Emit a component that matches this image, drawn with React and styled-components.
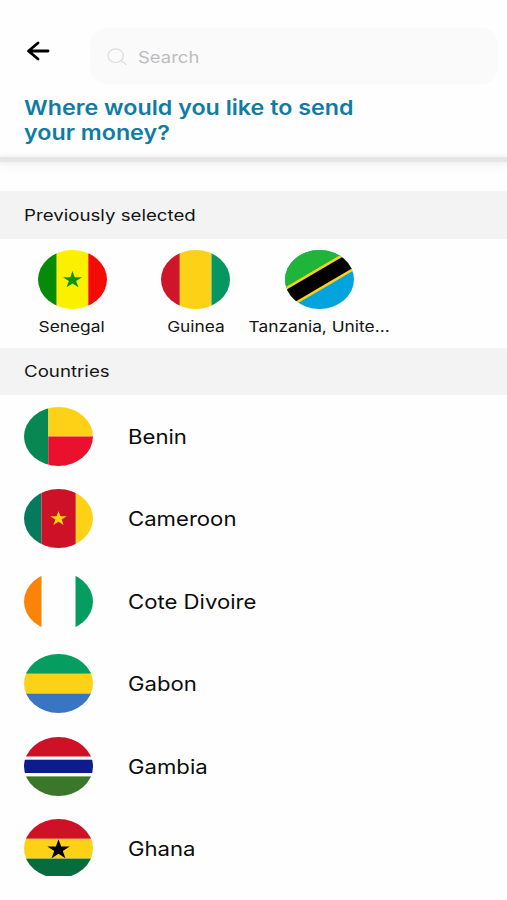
import React from 'react';
import styled, { createGlobalStyle } from 'styled-components';

const GlobalStyle = createGlobalStyle`
  * {
    box-sizing: border-box;
  }
  body {
    margin: 0;
    background: #fefefe;
    font-family: Inter, 'Liberation Sans', sans-serif;
  }
  h1, h2, ul {
    margin: 0;
    padding: 0;
  }
`;

const Screen = styled.main`
  display: flex;
  flex-direction: column;
  height: 900px;
  padding-bottom: 24px;
  overflow: hidden;
`;

const Header = styled.header`
  flex: none;
  height: 157px;
  padding: 28px 9px 0 24px;
`;

const TopBar = styled.div`
  display: flex;
  justify-content: space-between;
`;

const BackButton = styled.button`
  display: flex;
  width: 28px;
  height: 46px;
  padding: 0 0 0 1px;
  border: 0;
  background: none;
  align-items: center;
`;

const SearchBox = styled.div`
  display: flex;
  align-items: center;
  width: 408px;
  height: 56px;
  padding: 1px 0 0 17px;
  gap: 10px;
  border-radius: 17px;
  background: #fafafa;
`;

// wide lettering, grows from the left edge unless told otherwise
const Text = styled.span`
  display: block;
  white-space: nowrap;
  color: ${({ color }) => color ?? '#141414'};
  font-size: ${({ $size }) => $size}px;
  font-weight: ${({ $weight }) => $weight ?? 400};
  line-height: ${({ $line }) => $line ?? '24px'};
  transform: scaleX(${({ $stretch }) => $stretch ?? 1.17});
  transform-origin: ${({ $origin }) => $origin ?? 'left'} center;
`;

const Title = styled.h1`
  margin-top: 11px;
`;

const Divider = styled.div`
  flex: none;
  height: 5px;
  margin-bottom: 29px;
  background: #e6e6e6;
  box-shadow: 0 0 4px 1px #ececec, 0 6px 8px #f6f6f6;
`;

const SectionTitle = styled.h2`
  display: flex;
  flex: none;
  align-items: center;
  height: ${({ $height }) => $height}px;
  padding: 1px 0 0 24px;
  background: #f3f3f3;
`;

const Recent = styled.div`
  display: flex;
  flex: none;
  height: 109px;
  padding: 11px 0 0 10.2px;
`;

const RecentItem = styled.div`
  display: flex;
  flex-direction: column;
  align-items: center;
  width: 123.7px;
  gap: 6px;
`;

const List = styled.ul`
  flex: 1;
  min-height: 0;
  overflow: hidden;
  list-style: none;
`;

const Row = styled.li`
  display: flex;
  align-items: center;
  height: 82.5px;
  padding-left: 24px;
  gap: 34.5px;
`;

const CountryName = styled(Text)`
  padding-top: 1px;
`;

const FlagFrame = styled.svg`
  display: block;
  flex: none;
  width: 69px;
  height: 59px;
  border-radius: 50%;
`;

const STAR = '0,-1 .225,-.309 .951,-.309 .363,.118 .588,.809 0,.382 -.588,.809 -.363,.118 -.951,-.309 -.225,-.309';

const Star = ({ r, color, cy = 29.5 }) => (
  <polygon points={STAR} fill={color} transform={`translate(34.5 ${cy}) scale(${r * 1.12} ${r})`} />
);

// bands: [start, size, colour]
const Bands = ({ bands, vertical }) =>
  bands.map(([at, size, fill]) =>
    vertical ? (
      <rect key={at} x={at} y="0" width={size} height="59" fill={fill} />
    ) : (
      <rect key={at} x="0" y={at} width="69" height={size} fill={fill} />
    )
  );

const flags = {
  senegal: (
    <>
      <Bands vertical bands={[[0, 18.7, '#078a08'], [18.7, 31.6, '#fbf000'], [50.3, 18.7, '#f40b06']]} />
      <Star r={9} color="#0a9410" cy={30} />
    </>
  ),
  guinea: <Bands vertical bands={[[0, 18.8, '#ce1529'], [18.8, 31.7, '#fdd116'], [50.5, 18.5, '#069663']]} />,
  tanzania: (
    <>
      <rect width="69" height="59" fill="#03a3dd" />
      <path d="M0 0H69V-2L0 39Z" fill="#1eb53a" />
      <path d="M-2 38.6L71 -4.2V19.1L-2 61.9Z" fill="#fcd116" />
      <path d="M-2 41.7L71 -1.1V16.1L-2 58.9Z" fill="#000" />
    </>
  ),
  benin: (
    <>
      <rect width="24.3" height="59" fill="#078751" />
      <rect x="24.3" width="44.7" height="29.5" fill="#fdd116" />
      <rect x="24.3" y="29.5" width="44.7" height="29.5" fill="#e9112d" />
    </>
  ),
  cameroon: (
    <>
      <Bands vertical bands={[[0, 17.5, '#067a5e'], [17.5, 34.3, '#ce1126'], [51.8, 17.2, '#fdd116']]} />
      <Star r={7.8} color="#fdd116" cy={29.7} />
    </>
  ),
  ivory: <Bands vertical bands={[[0, 17.7, '#f98407'], [17.7, 33.8, '#fefefe'], [51.5, 17.5, '#069e60']]} />,
  gabon: <Bands bands={[[0, 19.8, '#069e60'], [19.8, 19.8, '#fdd116'], [39.6, 19.4, '#3a75c4']]} />,
  gambia: (
    <Bands
      bands={[
        [0, 19.7, '#ce1126'],
        [19.7, 3, '#fff'],
        [22.7, 13.5, '#0c1c8c'],
        [36.2, 3.2, '#fff'],
        [39.4, 19.6, '#3a7728'],
      ]}
    />
  ),
  ghana: (
    <>
      <Bands bands={[[0, 19.8, '#ce1126'], [19.8, 19.8, '#fdd116'], [39.6, 19.4, '#066b3f']]} />
      <Star r={10.5} color="#000" cy={30.7} />
    </>
  ),
};

const Flag = ({ name }) => <FlagFrame viewBox="0 0 69 59">{flags[name]}</FlagFrame>;

const recent = [
  { name: 'Senegal', flag: 'senegal' },
  { name: 'Guinea', flag: 'guinea' },
  { name: 'Tanzania, Unite...', flag: 'tanzania' },
];

const countries = [
  { name: 'Benin', flag: 'benin' },
  { name: 'Cameroon', flag: 'cameroon' },
  { name: 'Cote Divoire', flag: 'ivory' },
  { name: 'Gabon', flag: 'gabon' },
  { name: 'Gambia', flag: 'gambia' },
  { name: 'Ghana', flag: 'ghana' },
];

const App = () => {
  return (
    <Screen>
      <GlobalStyle />
      <Header>
        <TopBar>
          <BackButton aria-label="Back">
            <svg width="26" height="22" viewBox="0 0 26 22" fill="none" stroke="#000" strokeWidth="2.8" strokeLinecap="round" strokeLinejoin="round">
              <path d="M23 11H4M13 3L3.5 11L13 19" />
            </svg>
          </BackButton>
          <SearchBox>
            <svg width="21" height="18" viewBox="0 0 21 18" fill="none" stroke="#dcdcdc" strokeWidth="1.2" strokeLinecap="round">
              <ellipse cx="8.7" cy="7.7" rx="7.7" ry="6.8" />
              <path d="M14.3 12.5L19 16.6" />
            </svg>
            <Text $size={16.5} $stretch={1.12} color="#bdbdbd">Search</Text>
          </SearchBox>
        </TopBar>
        <Title>
          <Text $size={20.5} $weight={600} $line="25px" $stretch={1.135} color="#0f7ca1">
            Where would you like to send
            <br />
            your money?
          </Text>
        </Title>
      </Header>
      <Divider />
      <SectionTitle $height={48}>
        <Text $size={15.5} $stretch={1.205}>Previously selected</Text>
      </SectionTitle>
      <Recent>
        {recent.map(({ name, flag }) => (
          <RecentItem key={name}>
            <Flag name={flag} />
            <Text $size={15} $stretch={1.155} $origin="center">{name}</Text>
          </RecentItem>
        ))}
      </Recent>
      <SectionTitle $height={47}>
        <Text $size={15.5} $stretch={1.205}>Countries</Text>
      </SectionTitle>
      <List>
        {countries.map(({ name, flag }) => (
          <Row key={name}>
            <Flag name={flag} />
            <CountryName $size={19.5} $stretch={1.135} color="#0c0c0c">{name}</CountryName>
          </Row>
        ))}
      </List>
    </Screen>
  );
};
export default App;
